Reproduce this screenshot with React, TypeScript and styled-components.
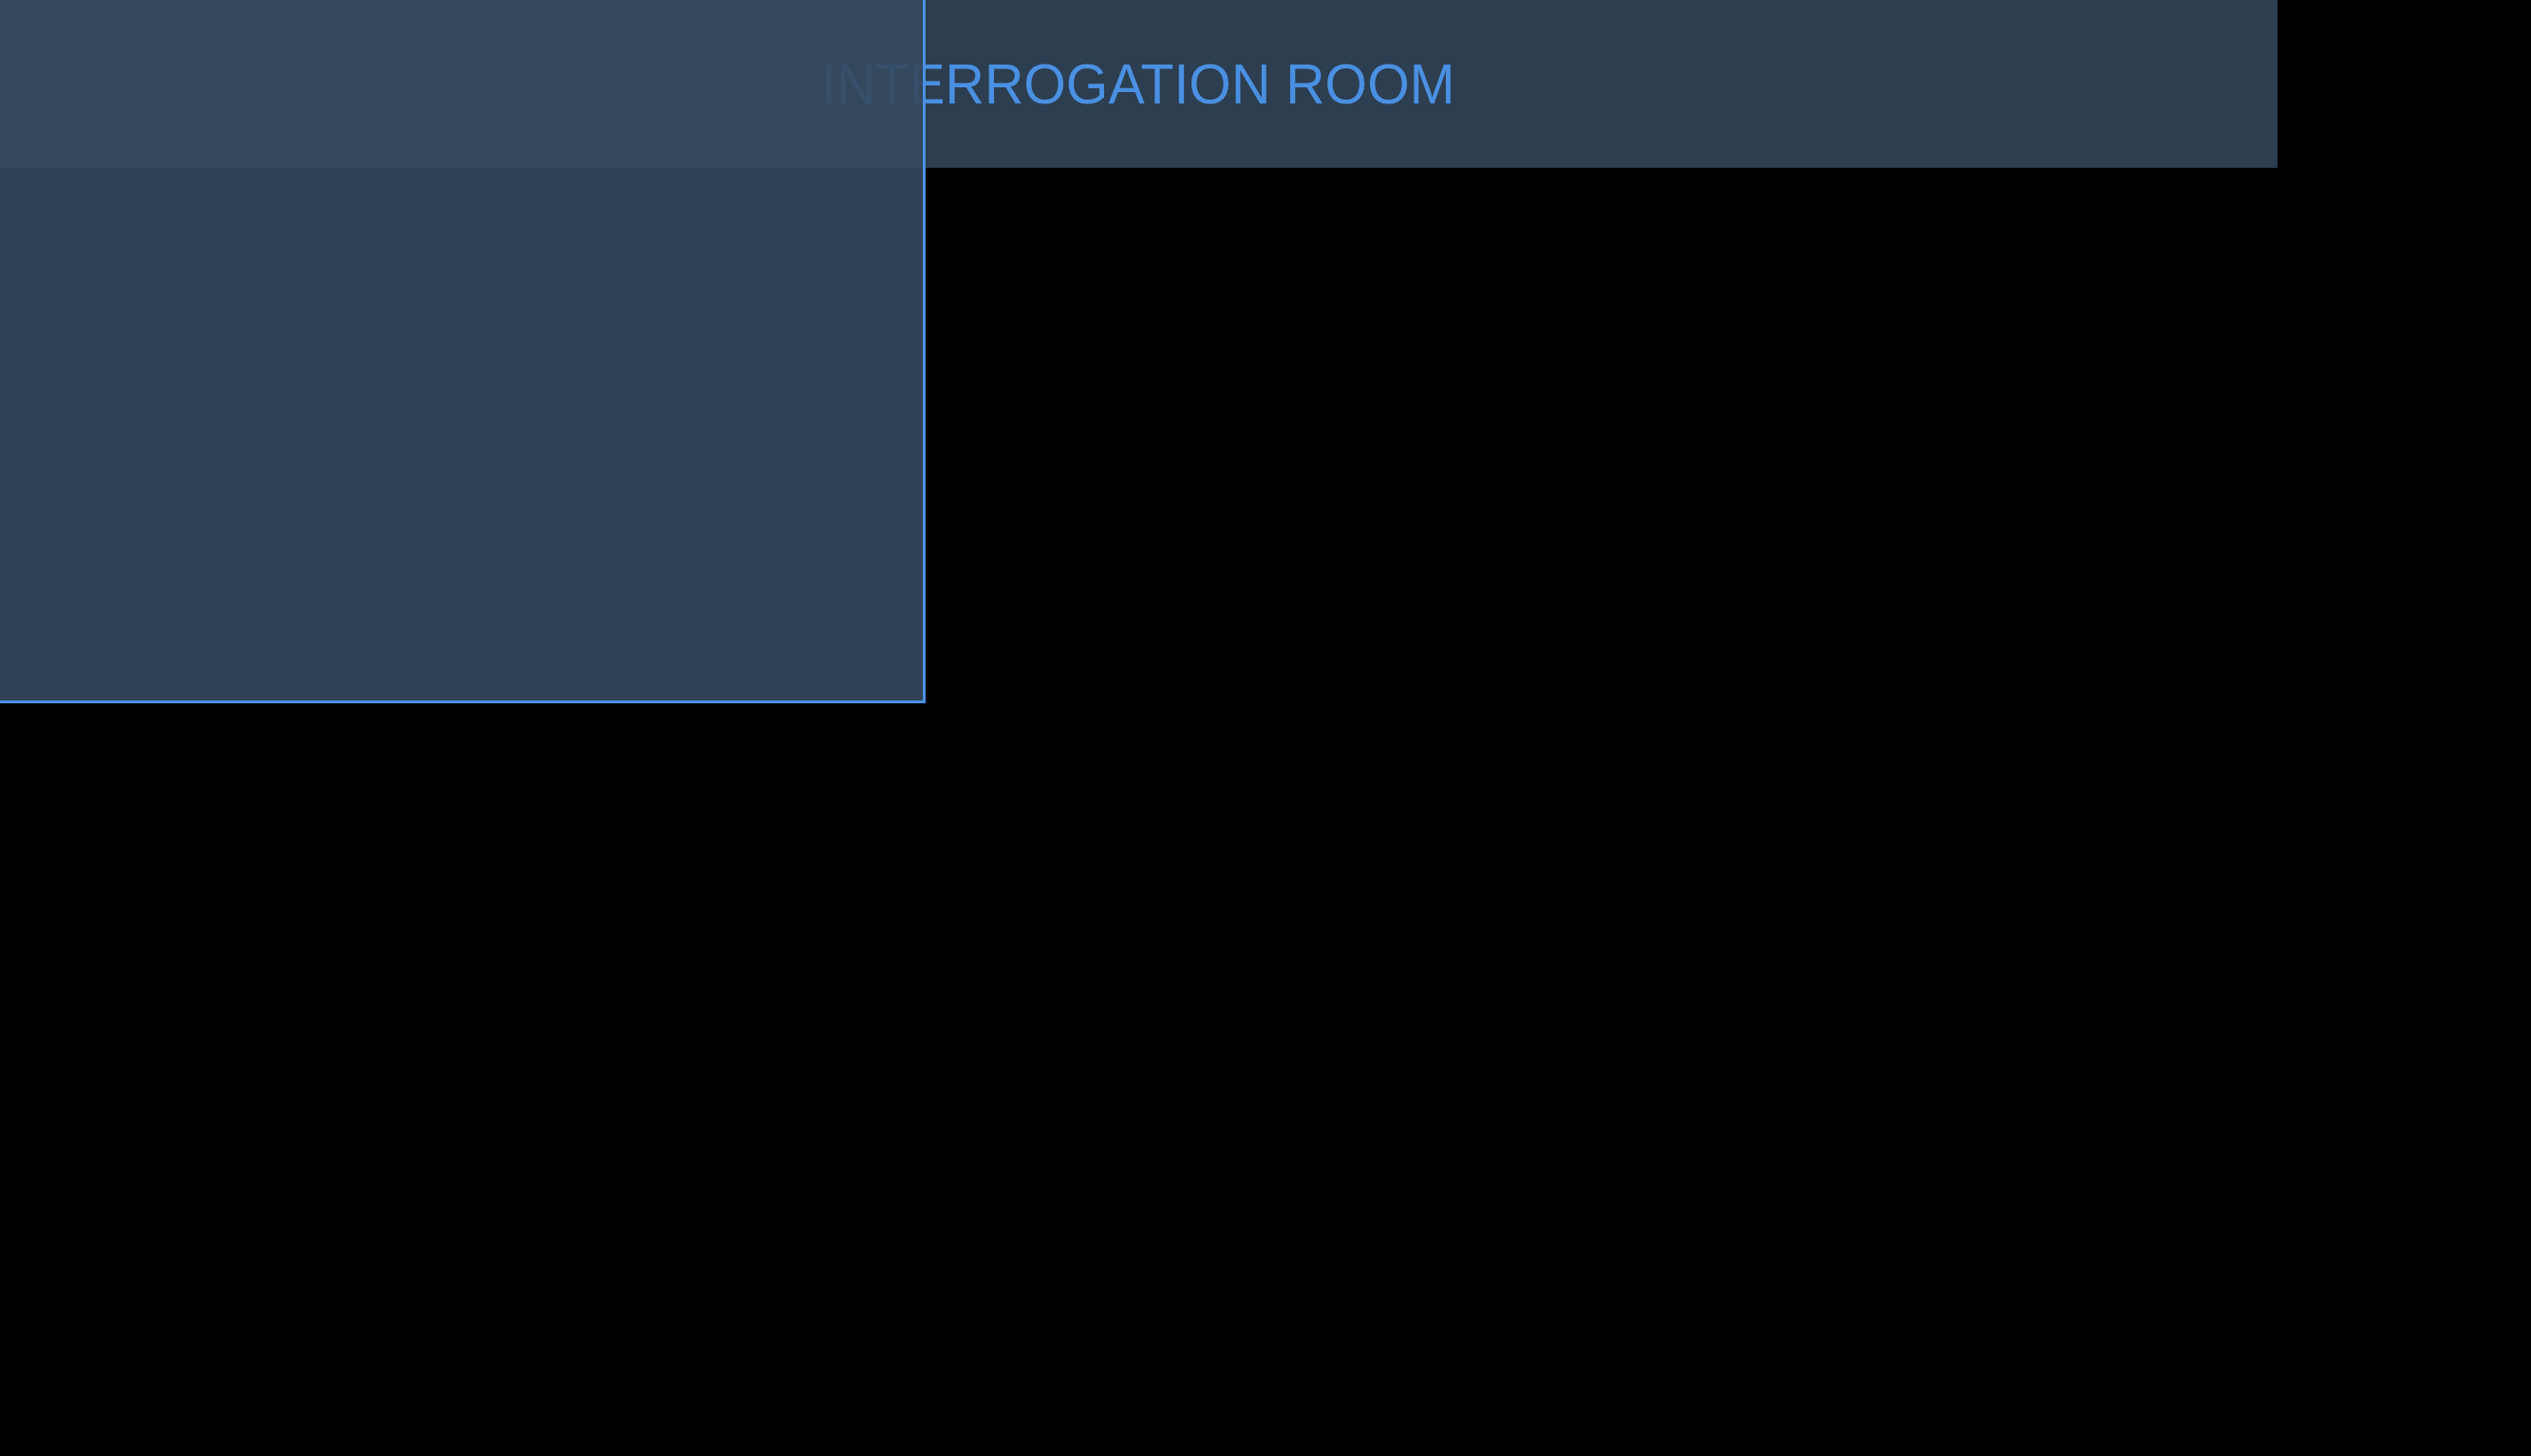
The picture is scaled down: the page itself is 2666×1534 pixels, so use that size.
import React from "react"
import styled, { createGlobalStyle } from "styled-components"

const GlobalStyle = createGlobalStyle`
  html, body {
    margin: 0;
    padding: 0;
    background: #000;
    font-family: "Liberation Sans", Arial, sans-serif;
  }
`

const Page = styled.div`
  position: relative;
  width: 100vw;
  height: 100vh;
  background: #000;
  overflow: hidden;
`

const Header = styled.header`
  width: 90%;
  height: 177px;
  box-sizing: border-box;
  background: #2c3e50;
  border-bottom: 1px solid #243444;
  border-right: 1px solid #293a4b;
  display: flex;
  align-items: center;
  padding-left: 865px;
`

const Title = styled.h1`
  margin: 0;
  font-size: 60px;
  font-weight: 400;
  line-height: 1;
  color: #4a90e2;
  padding-top: 2px;
  transform: scaleX(0.955);
  transform-origin: left center;
  white-space: nowrap;
`

// side drawer, laid over the header
const Drawer = styled.aside`
  position: absolute;
  top: 0;
  left: 0;
  width: 975px;
  height: 741px;
  box-sizing: border-box;
  background: rgba(52, 73, 94, 0.9);
  border-right: 3px solid #4a90e2;
  border-bottom: 3px solid #4a90e2;
`

const App = () => {
  return (
    <>
      <GlobalStyle />
      <Page>
        <Header>
          <Title>INTERROGATION ROOM</Title>
        </Header>
        <Drawer />
      </Page>
    </>
  )
}

export default App
